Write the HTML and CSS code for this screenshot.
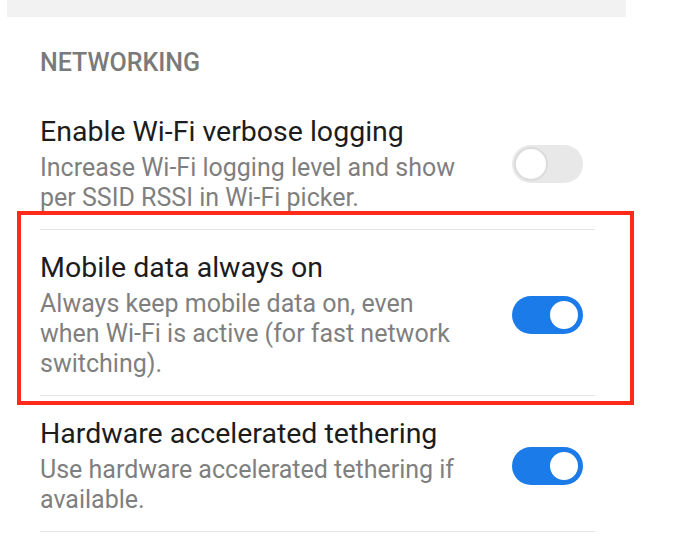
FILE: index.html
```html
<!DOCTYPE html>
<html lang="en">
<head>
  <meta charset="UTF-8" />
  <meta name="viewport" content="width=device-width, initial-scale=1.0" />
  <title>Developer options</title>
  <link rel="stylesheet" href="styles.css">
</head>
<body>
  <div class="screen">
    <div class="top-bar"></div>

    <div class="section">
      <h3 class="section-title">NETWORKING</h3>

      <div class="pref">
        <div class="pref-text">
          <div class="pref-title">Enable Wi-Fi verbose logging</div>
          <div class="pref-summary">Increase Wi-Fi logging level and show per SSID RSSI in Wi-Fi picker.</div>
        </div>
        <div class="switch"><span class="knob"></span></div>
      </div>

      <div class="pref">
        <div class="pref-text">
          <div class="pref-title">Mobile data always on</div>
          <div class="pref-summary">Always keep mobile data on, even when Wi-Fi is active (for fast network switching).</div>
        </div>
        <div class="switch on"><span class="knob"></span></div>
      </div>

      <div class="pref">
        <div class="pref-text">
          <div class="pref-title">Hardware accelerated tethering</div>
          <div class="pref-summary">Use hardware accelerated tethering if available.</div>
        </div>
        <div class="switch on"><span class="knob"></span></div>
      </div>

      <!-- annotation box drawn over the second row -->
      <div class="highlight"></div>
    </div>
  </div>
</body>
</html>
```

FILE: styles.css
```css
body {
  font-family: Roboto, "Noto Sans", sans-serif;
  background: #fff;
  margin: 0;
  padding: 0;
}
.screen {
  width: 674px;
}
.top-bar {
  height: 17px;
  margin: 0 48px 0 7px;
  background: #f2f2f2;
}
.section {
  position: relative;
  padding: 0 79px 0 40px;
}
.section-title {
  margin: 0;
  padding-top: 31px;
  height: 46px;
  font-size: 25px;
  font-weight: 500;
  line-height: 30px;
  color: #7a7a7a;
}
.pref {
  display: flex;
  align-items: center;
  padding: 21px 0 16px;
  border-bottom: 1px solid #e3e3e3;
}
.pref-text {
  flex: 1;
  max-width: 430px;
}
.pref-title {
  font-size: 28.5px;
  line-height: 34px;
  color: #1c1c1c;
  white-space: nowrap;
}
.pref-summary {
  margin-top: 4px;
  font-size: 25px;
  line-height: 30px;
  color: #7f7f7f;
}
.switch {
  position: relative;
  margin-left: auto;
  margin-right: 12px;
  width: 71px;
  height: 38px;
  border-radius: 19px;
  background: #e8e8e8;
  flex-shrink: 0;
}
.switch .knob {
  position: absolute;
  top: 2px;
  left: 2px;
  width: 30px;
  height: 30px;
  border-radius: 50%;
  background: #fff;
  border: 2px solid #dcdcdc;
}
.switch.on {
  background: #1b7be9;
}
.switch.on .knob {
  left: auto;
  right: 3px;
  top: 3px;
  width: 28px;
  height: 28px;
  border: 2px solid #1b7be9;
}
.highlight {
  position: absolute;
  left: 17px;
  top: 194px;
  width: 609px;
  height: 186px;
  border: 4px solid #ff2a1a;
  pointer-events: none;
}
```
